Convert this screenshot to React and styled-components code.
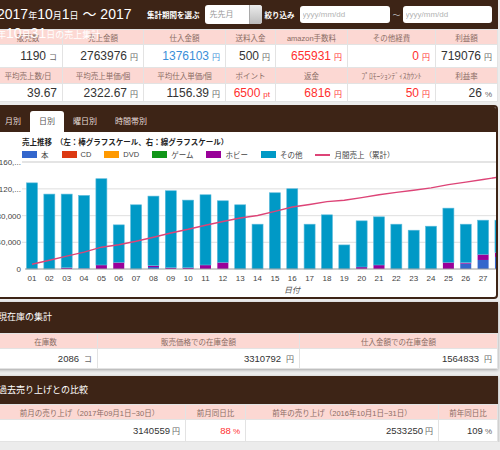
import React from 'react';
import styled, { createGlobalStyle } from 'styled-components';

const BROWN = '#3d2416';
const PINK = '#fcd8d3';
const LINE = '#e3e3e3';
const RED = '#ff3030';
const BLUE = '#3a8ed8';

const GlobalStyle = createGlobalStyle`
  html, body { margin: 0; padding: 0; background: #ececec; overflow: hidden; }
  body { font-family: "Liberation Sans", "Noto Sans CJK JP", sans-serif; color: #333; }
`;

const Page = styled.div`
  width: 505px;
  margin-left: -7px;
`;

const Top = styled.div`
  background: #fff;
`;

const Header = styled.header`
  display: flex;
  align-items: center;
  height: 29px;
  background: ${BROWN};
  color: #fff;
`;

const Title = styled.h1`
  position: relative;
  z-index: 2;
  align-self: flex-start;
  width: 137px;
  flex: none;
  margin: 0;
  padding: 6px 0 0 4px;
  font-size: 14px;
  font-weight: normal;
  line-height: 17px;
  color: #fff;
`;

const Small = styled.span`
  font-size: 9px;
`;

const Controls = styled.div`
  display: flex;
  align-items: center;
  margin-left: 13px;
`;

const CtrlLabel = styled.span`
  font-size: 7.5px;
  font-weight: bold;
  color: #fff;
  white-space: nowrap;
  margin-right: ${p => p.$mr || 0}px;
  margin-left: ${p => p.$ml || 0}px;
`;

const Select = styled.div`
  display: flex;
  width: 57px;
  height: 19px;
  border-radius: 3px;
  overflow: hidden;
  background: #fff;
`;

const SelectText = styled.span`
  flex: 1;
  padding-left: 5px;
  font-size: 8px;
  line-height: 19px;
  color: #999;
`;

const SelectBtn = styled.span`
  width: 12px;
  background: linear-gradient(#ececec, #bcbcbc);
  border-left: 1px solid #a9a9a9;
`;

const DateInput = styled.input`
  width: ${p => p.$w}px;
  height: 17px;
  box-sizing: border-box;
  margin-left: ${p => p.$ml || 0}px;
  border: none;
  border-radius: 3px;
  padding: 0 3px;
  font-family: "Liberation Sans", sans-serif;
  font-size: 8px;
  outline: none;
  &::placeholder { color: #b3b3b3; }
`;

const Tilde = styled.span`
  font-size: 8px;
  color: #bbb;
  margin: 0 2px 0 3px;
`;

const Grid = styled.table`
  width: 504px;
  border-collapse: collapse;
  table-layout: fixed;
  background: #fff;
`;

const Th = styled.th`
  height: ${p => p.$h}px;
  padding: 0;
  background: ${PINK};
  border: 1px solid ${LINE};
  color: #8a6c64;
  font-size: 7.5px;
  font-weight: normal;
  text-align: center;
  white-space: nowrap;
  overflow: hidden;
`;

const Td = styled.td`
  height: ${p => p.$h}px;
  padding: 0 5px 0 0;
  border: 1px solid ${LINE};
  text-align: right;
  font-size: ${p => p.$fs || 12}px;
  color: ${p => (p.$tone === 'red' ? RED : p.$tone === 'blue' ? BLUE : '#333')};
  white-space: nowrap;
`;

const Unit = styled.span`
  font-size: 8px;
  margin-left: ${p => p.$gap || 2}px;
  color: ${p => (p.$grey ? '#666' : 'inherit')};
`;

const TabPanel = styled.section`
  width: 505px;
  box-sizing: border-box;
  margin-top: 3px;
  border: 2px solid ${BROWN};
  border-radius: 4px;
  overflow: hidden;
  background: #fff;
`;

const TabBar = styled.nav`
  display: flex;
  align-items: flex-end;
  height: 25px;
  padding-left: 1px;
  background: ${BROWN};
`;

const Tab = styled.span`
  height: 21px;
  padding: 0 9px;
  line-height: 21px;
  font-size: 8px;
  border-radius: 3px 3px 0 0;
  background: ${p => (p.$active ? '#fff' : 'transparent')};
  color: ${p => (p.$active ? '#555' : '#e6ddd8')};
`;

const Legend = styled.div`
  height: 27px;
  box-sizing: border-box;
  padding: 6px 0 0 27px;
`;

const LegendTitle = styled.div`
  font-size: 7.5px;
  font-weight: bold;
  line-height: 10px;
  color: #222;
  white-space: pre;
`;

const LegendRow = styled.div`
  display: flex;
  align-items: center;
  gap: 13px;
  height: 9px;
  margin-top: 2px;
`;

const LegendItem = styled.span`
  display: flex;
  align-items: center;
  gap: 4px;
  font-size: 7.5px;
  color: #444;
`;

const Swatch = styled.span`
  width: 15px;
  height: ${p => (p.$line ? 2 : 7)}px;
  background: ${p => p.$c};
`;

const Plot = styled.svg`
  display: block;
`;

const InfoPanel = styled.section`
  width: 505px;
  margin-top: ${p => p.$gap}px;
  background: #fff;
  box-shadow: 0 1px 3px rgba(0, 0, 0, 0.3);
`;

const InfoHead = styled.h2`
  margin: 0;
  height: ${p => p.$h}px;
  padding-left: 5px;
  background: ${BROWN};
  color: #fff;
  font-size: 9px;
  font-weight: normal;
  line-height: ${p => p.$h}px;
`;

const COLORS = {
  hon: '#3366cc',
  cd: '#dc3912',
  dvd: '#ff9900',
  game: '#109618',
  hobby: '#990099',
  other: '#0099c6',
  line: '#dd4477',
};

// daily sales in thousands: [total, 本, ホビー]
const DAYS = [
  [128.8, 0, 0], [112, 0, 0], [112, 0, 2], [110, 0, 1], [135, 0, 6],
  [66, 0, 10], [96, 0, 0], [109, 3, 2], [117, 0, 2], [103, 0, 2],
  [111, 0, 6], [102, 0, 10], [96, 0, 0], [67, 0, 0], [114, 0, 0],
  [120, 0, 0], [67, 0, 0], [81, 0, 0], [36, 0, 0], [72, 0, 3],
  [78, 0, 6], [67, 0, 0], [58, 0, 0], [64, 0, 0], [91, 0, 10],
  [67, 8, 1.5], [73, 13.5, 8.5], [73, 18, 7], [70, 10, 5], [80, 6, 4], [90, 5, 3],
];

const X0 = 32;
const STEP = 17.35;
const BW = 11;
const BASE = 268;
const K = 0.66875;
const LK = 0.0365;

const SalesChart = () => {
  let cum = 0;
  const pts = DAYS.map(([t], i) => {
    cum += t;
    return `${(X0 + i * STEP).toFixed(1)},${(BASE - cum * LK).toFixed(1)}`;
  });
  const grid = [120, 80, 40];
  const yLabels = [
    ['160,...', 161], ['120,...', 187.8], ['80,000', 214.5], ['40,000', 241.3], ['0', 268],
  ];
  return (
    <Plot width={501} height={138} viewBox="-5 158 501 138">
      <rect x={22} y={160} width={476} height={2} fill="#e4e4e4" />
      {grid.map(v => (
        <rect key={v} x={22} y={BASE - v * K - 0.5} width={476} height={1.2} fill="#e4e4e4" />
      ))}
      {yLabels.map(([t, y]) => (
        <text key={t} x={21} y={y + 3} textAnchor="end" fontSize="8" fill="#444"
          fontFamily="Liberation Sans, sans-serif">{t}</text>
      ))}
      {DAYS.map(([t, hon, hob], i) => {
        const x = X0 + i * STEP - BW / 2;
        const segs = [[hon, COLORS.hon], [hob, COLORS.hobby], [t - hon - hob, COLORS.other]];
        let acc = 0;
        return (
          <g key={i}>
            {segs.map(([v, c], j) => {
              if (!v) return null;
              const y = BASE - (acc + v) * K;
              acc += v;
              return <rect key={j} x={x} y={y} width={BW} height={v * K} fill={c}
                stroke="#5dbbdc" strokeWidth={j === 2 ? 0.6 : 0} />;
            })}
          </g>
        );
      })}
      <line x1={25} x2={498} y1={BASE} y2={BASE} stroke="#9a9a9a" strokeWidth="1" />
      <polyline points={pts.join(' ')} fill="none" stroke={COLORS.line} strokeWidth="1.4" />
      {DAYS.map((_, i) => (
        <text key={i} x={X0 + i * STEP} y={280} textAnchor="middle" fontSize="8" fill="#444"
          fontFamily="Liberation Sans, sans-serif">{String(i + 1).padStart(2, '0')}</text>
      ))}
      <text x={292} y={292} textAnchor="middle" fontSize="8" fill="#555" fontStyle="italic"
        fontFamily="Noto Sans CJK JP, sans-serif">日付</text>
    </Plot>
  );
};

const SUMMARY_COLS = [69, 81, 82, 50, 72, 88, 62];
const SUMMARY = [
  {
    labels: ['販売数', '売上金額', '仕入金額', '送料入金', 'amazon手数料', 'その他経費', '利益額'],
    values: [['1190', 'コ'], ['2763976', '円'], ['1376103', '円', 'blue'], ['500', '円'],
      ['655931', '円', 'red'], ['0', '円', 'red'], ['719076', '円']],
    h: [14, 22],
  },
  {
    labels: ['平均売上数/日', '平均売上単価/個', '平均仕入単価/個', 'ポイント', '返金', 'ﾌﾟﾛﾓｰｼｮﾝﾃﾞｨｽｶｳﾝﾄ', '利益率'],
    values: [['39.67', ''], ['2322.67', '円'], ['1156.39', '円'], ['6500', 'pt', 'red'],
      ['6816', '円', 'red'], ['50', '円', 'red'], ['26', '%']],
    h: [15, 17],
  },
];

const Cols = ({ widths }) => (
  <colgroup>
    {widths.map((w, i) => <col key={i} style={{ width: w }} />)}
  </colgroup>
);

const InfoTable = ({ widths, labels, values, rowH, fs, gap }) => (
  <Grid>
    <Cols widths={widths} />
    <tbody>
      <tr>{labels.map(l => <Th key={l} $h={14}>{l}</Th>)}</tr>
      <tr>
        {values.map(([v, u, tone], i) => (
          <Td key={i} $h={rowH} $fs={fs} $tone={tone}>
            {v}<Unit $gap={gap} $grey={!tone}>{u}</Unit>
          </Td>
        ))}
      </tr>
    </tbody>
  </Grid>
);

export default function App() {
  return (
    <Page>
      <GlobalStyle />
      <Top>
        <Header>
          <Title>
            2017<Small>年</Small>10<Small>月</Small>1<Small>日</Small> ～ 2017<Small>年</Small>10<Small>月</Small>31<Small>日の売上集計</Small>
          </Title>
          <Controls>
            <CtrlLabel $mr={5}>集計期間を選ぶ</CtrlLabel>
            <Select>
              <SelectText>先先月</SelectText>
              <SelectBtn />
            </Select>
            <CtrlLabel $ml={3}>絞り込み</CtrlLabel>
            <DateInput $w={90} $ml={5} placeholder="yyyy/mm/dd" />
            <Tilde>～</Tilde>
            <DateInput $w={89} placeholder="yyyy/mm/dd" />
          </Controls>
        </Header>
        <Grid>
          <Cols widths={SUMMARY_COLS} />
          <tbody>
            {SUMMARY.map((r, ri) => (
              <React.Fragment key={ri}>
                <tr>{r.labels.map(l => <Th key={l} $h={r.h[0]}>{l}</Th>)}</tr>
                <tr>
                  {r.values.map(([v, u, tone], i) => (
                    <Td key={i} $h={r.h[1]} $tone={tone}>
                      {v}{u && <Unit $gap={3} $grey={!tone}>{u}</Unit>}
                    </Td>
                  ))}
                </tr>
              </React.Fragment>
            ))}
          </tbody>
        </Grid>
      </Top>

      <TabPanel>
        <TabBar>
          <Tab>月別</Tab>
          <Tab $active>日別</Tab>
          <Tab>曜日別</Tab>
          <Tab>時間帯別</Tab>
        </TabBar>
        <Legend>
          <LegendTitle>{'売上推移　（左：棒グラフスケール、右：線グラフスケール）'}</LegendTitle>
          <LegendRow>
            <LegendItem><Swatch $c={COLORS.hon} />本</LegendItem>
            <LegendItem><Swatch $c={COLORS.cd} />CD</LegendItem>
            <LegendItem><Swatch $c={COLORS.dvd} />DVD</LegendItem>
            <LegendItem><Swatch $c={COLORS.game} />ゲーム</LegendItem>
            <LegendItem><Swatch $c={COLORS.hobby} />ホビー</LegendItem>
            <LegendItem><Swatch $c={COLORS.other} />その他</LegendItem>
            <LegendItem><Swatch $line $c={COLORS.line} />月間売上（累計）</LegendItem>
          </LegendRow>
        </Legend>
        <SalesChart />
      </TabPanel>

      <InfoPanel $gap={3}>
        <InfoHead $h={31}>現在庫の集計</InfoHead>
        <InfoTable
          widths={[104, 202, 198]}
          labels={['在庫数', '販売価格での在庫金額', '仕入金額での在庫金額']}
          values={[['2086', 'コ'], ['3310792', '円'], ['1564833', '円']]}
          rowH={19}
          fs={9.5}
          gap={5}
        />
      </InfoPanel>

      <InfoPanel $gap={7}>
        <InfoHead $h={28}>過去売り上げとの比較</InfoHead>
        <InfoTable
          widths={[192, 60, 193, 59]}
          labels={['前月の売り上げ（2017年09月1日~30日）', '前月同日比', '前年の売り上げ（2016年10月1日~31日）', '前年同日比']}
          values={[['3140559', '円'], ['88', '%', 'red'], ['2533250', '円'], ['109', '%']]}
          rowH={21}
          fs={9.5}
          gap={2}
        />
      </InfoPanel>
    </Page>
  );
}
